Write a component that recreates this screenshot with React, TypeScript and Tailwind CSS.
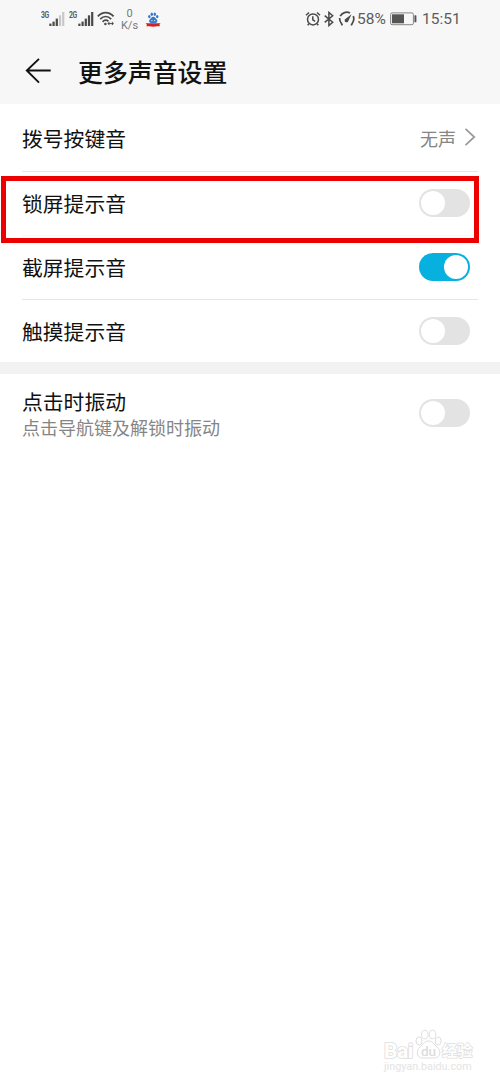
import { useState } from 'react';
import clsx from 'clsx';

function SignalIcon({ weak }: { weak?: boolean }) {
  return (
    <svg width="16" height="16" viewBox="0 0 16 16" fill="#4a4a4a">
      <rect x="0.3" y="11.6" width="2.2" height="2.4" />
      <rect x="3.5" y="9.6" width="2.2" height="4.4" />
      <rect x="6.7" y="6.6" width="2.2" height="7.4" />
      <rect x="9.9" y="3.3" width="2.2" height="10.7" fill={weak ? '#c8c8c8' : '#4a4a4a'} />
      <rect x="13.1" y="0" width="2.2" height="14" fill={weak ? '#c8c8c8' : '#4a4a4a'} />
    </svg>
  );
}

function WifiIcon() {
  return (
    <svg width="18" height="16" viewBox="0 0 18 16" fill="none" stroke="#4a4a4a" strokeWidth="1.7">
      <path d="M0.8 5.4C5.4 0.3 12 0.3 16.6 5.4" />
      <path d="M3.2 8.2C6.6 4.6 10.8 4.6 14.2 8.2" />
      <path d="M5.6 10.8C7.6 8.7 9.8 8.7 11.4 10.4" />
      <circle cx="8.4" cy="13" r="1.3" fill="#4a4a4a" stroke="none" />
      <path d="M10.4 12.6l2-2v4zM16.9 12.6l-2-2v4z" fill="#4a4a4a" stroke="none" />
      <path d="M12 12.6h3.4" strokeWidth="1" />
    </svg>
  );
}

function BaiduIcon() {
  return (
    <svg width="16" height="16" viewBox="0 0 16 16">
      <g fill="#3477d0">
        <ellipse cx="4.3" cy="4.6" rx="1.2" ry="1.6" />
        <ellipse cx="6.8" cy="2.3" rx="1.2" ry="1.7" />
        <ellipse cx="9.8" cy="2.3" rx="1.2" ry="1.7" />
        <ellipse cx="12.2" cy="4.6" rx="1.2" ry="1.6" />
        <path d="M8.2 4.8c2 0 2.3 1.7 3.3 2.5 1.4 1.2 1 3.7-1 3.7H6c-2 0-2.5-2.5-1-3.7 1-.8 1.3-2.5 3.2-2.5z" />
      </g>
      <path d="M6.3 8.7h1.2M9 8.7h1.2" stroke="#fff" strokeWidth="0.9" />
      <path d="M0.6 11.2h14.9l-1.2 1.9 .9 1.1-2.9.1q-4 .9-8.2 0l-3-.1 1-1.2z" fill="#cf2423" />
    </svg>
  );
}

function AlarmIcon() {
  return (
    <svg width="16" height="16" viewBox="0 0 16 16" fill="none" stroke="#4a4a4a" strokeWidth="1.5">
      <circle cx="8" cy="8.4" r="5.5" />
      <path d="M7.8 5.3v3.5l2.4 1.5M1 4.2L4 1.5M15 4.2L12 1.5M3.9 12.7l-1.2 1.6M12.1 12.7l1.2 1.6" />
    </svg>
  );
}

function BluetoothIcon() {
  return (
    <svg width="10" height="16" viewBox="0 0 10 16" fill="none" stroke="#4a4a4a" strokeWidth="1.5">
      <path d="M0.7 4.6l8 6.6-3.8 3.3v-13l3.8 3.3-8 6.6" />
    </svg>
  );
}

function SpeedIcon() {
  return (
    <svg width="18" height="16" viewBox="0 0 18 16" fill="none" stroke="#4a4a4a" strokeWidth="1.7">
      <path d="M4.3 14.3l-1-2.2M3.3 12.2A7 7 0 0 1 1.7 7M2.2 5.2A7.5 7.5 0 0 1 12 1.9M15.2 5.2A7 7 0 0 1 14.3 12.2M14.5 12l-1.3 2.3" />
      <path d="M13.6 3.2l-3.2 6.5a1.9 1.9 0 1 1-2.7-2z" fill="#4a4a4a" stroke="none" />
    </svg>
  );
}

function BatteryIcon() {
  return (
    <svg width="27" height="14" viewBox="0 0 27 14">
      <rect x="0.6" y="0.9" width="22.8" height="11.8" rx="1.5" fill="none" stroke="#858585" strokeWidth="1" />
      <rect x="2" y="2.3" width="12" height="9" fill="#555" />
      <rect x="24.4" y="3.3" width="2" height="7" rx="0.6" fill="#555" />
    </svg>
  );
}

function StatusBar() {
  return (
    <div className="flex h-10 items-start justify-between pr-[39px] pl-[41px] text-[#5c5c5c]">
      <div className="flex items-start">
        <span className="mt-[10px] w-2 text-[9px] leading-[10px] font-bold tracking-[-0.5px]">
          <span className="inline-block origin-left scale-x-[0.76]">3G</span>
        </span>
        <div className="mt-[12px] w-[20px]">
          <SignalIcon weak />
        </div>
        <span className="mt-[10px] w-2 text-[9px] leading-[10px] font-bold tracking-[-0.5px]">
          <span className="inline-block origin-left scale-x-[0.76]">2G</span>
        </span>
        <div className="mt-[12px] ml-[0.5px] w-[19px]">
          <SignalIcon />
        </div>
        <div className="mt-[11px]">
          <WifiIcon />
        </div>
        <div className="mt-[8px] ml-[5px] flex w-5 flex-col items-center text-[11px] leading-3 text-[#777]">
          <span>0</span>
          <span>K/s</span>
        </div>
        <div className="mt-[12px] ml-[5px]">
          <BaiduIcon />
        </div>
      </div>
      <div className="mt-[9px] flex h-5 items-center text-[15.5px]">
        <AlarmIcon />
        <div className="ml-[3px]">
          <BluetoothIcon />
        </div>
        <div className="ml-[4px]">
          <SpeedIcon />
        </div>
        <span className="mt-px ml-px w-[33px] text-[15.5px]">58%</span>
        <BatteryIcon />
        <span className="mt-[2px] ml-[5px] w-[39px]">15:51</span>
      </div>
    </div>
  );
}

function Toggle({ defaultOn = false }: { defaultOn?: boolean }) {
  const [on, setOn] = useState(defaultOn);

  return (
    <button
      type="button"
      role="switch"
      aria-checked={on}
      onClick={() => setOn(!on)}
      className={clsx(
        'mr-[30px] flex h-7 w-[51px] items-center rounded-full px-[2px]',
        on ? 'justify-end bg-[#06b1df]' : 'bg-[#e3e3e3]',
      )}
    >
      <span className="size-6 shrink-0 rounded-full bg-white" />
    </button>
  );
}

function Divider({ faint }: { faint?: boolean }) {
  return <div className={clsx('mx-[22px] h-px', faint ? 'bg-[#f8f5f5]' : 'bg-[#e6e6e6]')} />;
}

function Label({ text }: { text: string }) {
  return <span className="text-[20.8px] leading-7 text-[#111]">{text}</span>;
}

function Watermark() {
  return (
    <div className="absolute top-[1029px] left-[384px] flex w-[92px] flex-col text-white">
      <div className="flex h-[30px] items-end">
        <span className="w-[31px] text-[21px] leading-[15px] font-bold tracking-[-0.5px] [paint-order:stroke_fill] [-webkit-text-stroke:1.6px_#dedede]">
          Bai
        </span>
        <div className="relative h-[30px] w-[27px]">
          <svg width="27" height="30" viewBox="0 0 27 30" fill="#fff" stroke="#dedede" strokeWidth="1">
            <ellipse cx="4" cy="12" rx="3" ry="4" />
            <ellipse cx="9.8" cy="5.5" rx="3.2" ry="4.3" />
            <ellipse cx="17.5" cy="5.5" rx="3.2" ry="4.3" />
            <ellipse cx="23.2" cy="12" rx="3" ry="4" />
            <path d="M13.5 12C17.8 12 19 15.5 22 18C27 22 25 29 19.5 29H7.5C2 29 0.5 22 5 18C8 15.5 9.2 12 13.5 12Z" />
          </svg>
          <span className="absolute top-[15px] left-[6px] text-[13.5px] leading-[14px] font-medium text-[#dcdcdc]">
            du
          </span>
        </div>
        <span className="text-[15.2px] leading-[15px] font-bold whitespace-nowrap [paint-order:stroke_fill] [-webkit-text-stroke:1.4px_#dedede]">
          经验
        </span>
      </div>
      <span className="mt-[2px] text-[10.8px] leading-[12px] whitespace-nowrap text-[#e4e4e4]">
        jingyan.baidu.com
      </span>
    </div>
  );
}

export default function App() {
  return (
    <div className="relative h-[1084px] w-[500px] overflow-hidden bg-white font-[Roboto,'Noto_Sans_CJK_SC',sans-serif]">
      <header className="h-[104px] bg-[#f7f7f7]">
        <StatusBar />
        <div className="flex h-[62px] items-center pl-[25px]">
          <svg width="27" height="26" viewBox="0 0 27 26" fill="none" stroke="#111" strokeWidth="1.9">
            <path d="M25.7 12.5H1.8M14 0.9L1.8 12.5 14 24.6" />
          </svg>
          <h1 className="mt-[6px] ml-[26px] text-[24.9px] font-medium text-[#111]">更多声音设置</h1>
        </div>
      </header>

      <main>
        <div className="flex h-[67px] items-center justify-between pt-px pl-[22px]">
          <div className="pt-[3px]">
            <Label text="拨号按键音" />
          </div>
          <div className="mr-[24px] flex items-center text-[18px] text-[#858585]">
            <span className="mt-[2px]">无声</span>
            <svg
              className="mb-[2px] ml-[8px]"
              width="12"
              height="18"
              viewBox="0 0 12 18"
              fill="none"
              stroke="#999"
              strokeWidth="1.7"
            >
              <path d="M1.5 0.9L10.3 9 1.5 17.1" />
            </svg>
          </div>
        </div>
        <Divider />
        <div className="flex h-[63px] items-center justify-between pb-px pl-[22px]">
          <div className="pt-[3px]">
            <Label text="锁屏提示音" />
          </div>
          <Toggle />
        </div>
        <Divider faint />
        <div className="flex h-[63px] items-center justify-between pb-px pl-[22px]">
          <div className="pt-[3px]">
            <Label text="截屏提示音" />
          </div>
          <Toggle defaultOn />
        </div>
        <Divider />
        <div className="flex h-[62px] items-center justify-between pl-[22px]">
          <div className="pt-[3px]">
            <Label text="触摸提示音" />
          </div>
          <Toggle />
        </div>
        <div className="h-3 bg-[#f2f2f2]" />
        <div className="flex h-[78px] items-center justify-between pl-[22px]">
          <div className="mt-1 flex flex-col">
            <Label text="点击时振动" />
            <span className="text-[18px] leading-6 text-[#858585]">点击导航键及解锁时振动</span>
          </div>
          <Toggle />
        </div>
      </main>

      {/* highlighted row */}
      <div className="pointer-events-none absolute top-[176px] left-px h-[67px] w-[478px] border-[5px] border-[#ec0000]" />

      <Watermark />
    </div>
  );
}
